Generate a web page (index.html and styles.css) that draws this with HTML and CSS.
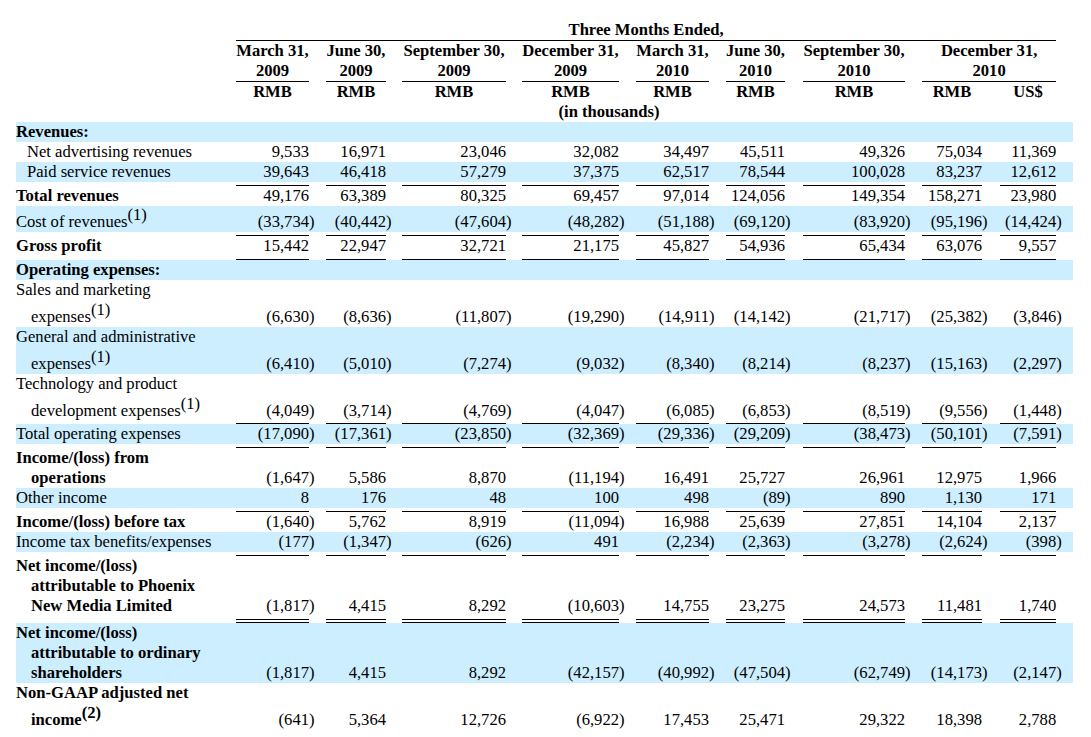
FILE: index.html
```html
<!DOCTYPE html>
<html>
<head>
<meta charset="utf-8">
<title>Three Months Ended</title>
<link rel="stylesheet" href="styles.css">
</head>
<body>
<table class="fin">
<colgroup>
<col class="c-lb">
<col class="w73"><col class="w17">
<col class="w60"><col class="w16">
<col class="w104"><col class="w16">
<col class="w97"><col class="w17">
<col class="w73"><col class="w17">
<col class="w59"><col class="w18">
<col class="w102"><col class="w17">
<col class="w60"><col class="w18">
<col class="w56"><col class="w17">
</colgroup>
<tbody>
<tr class="hd"><td></td><td colspan="17" class="tl">Three Months Ended,</td><td></td></tr>
<tr class="hd"><td></td><td class="tl">March 31,<br>2009</td><td></td><td class="tl">June 30,<br>2009</td><td></td><td class="tl">September 30,<br>2009</td><td></td><td class="tl">December 31,<br>2009</td><td></td><td class="tl">March 31,<br>2010</td><td></td><td class="tl">June 30,<br>2010</td><td></td><td class="tl">September 30,<br>2010</td><td></td><td colspan="3" class="tl">December 31,<br>2010</td><td></td></tr>
<tr class="hd"><td></td><td>RMB</td><td></td><td>RMB</td><td></td><td>RMB</td><td></td><td>RMB</td><td></td><td>RMB</td><td></td><td>RMB</td><td></td><td>RMB</td><td></td><td>RMB</td><td></td><td>US$</td><td></td></tr>
<tr class="hd"><td></td><td colspan="15">(in thousands)</td><td></td><td></td><td></td></tr>

<tr class="band"><td><div class="b">Revenues:</div></td><td></td><td></td><td></td><td></td><td></td><td></td><td></td><td></td><td></td><td></td><td></td><td></td><td></td><td></td><td></td><td></td><td></td><td></td></tr>
<tr><td><div class="in1">Net advertising revenues</div></td><td class="n">9,533</td><td class="p"></td><td class="n">16,971</td><td class="p"></td><td class="n">23,046</td><td class="p"></td><td class="n">32,082</td><td class="p"></td><td class="n">34,497</td><td class="p"></td><td class="n">45,511</td><td class="p"></td><td class="n">49,326</td><td class="p"></td><td class="n">75,034</td><td class="p"></td><td class="n">11,369</td><td class="p"></td></tr>
<tr class="band"><td><div class="in1">Paid service revenues</div></td><td class="n">39,643</td><td class="p"></td><td class="n">46,418</td><td class="p"></td><td class="n">57,279</td><td class="p"></td><td class="n">37,375</td><td class="p"></td><td class="n">62,517</td><td class="p"></td><td class="n">78,544</td><td class="p"></td><td class="n">100,028</td><td class="p"></td><td class="n">83,237</td><td class="p"></td><td class="n">12,612</td><td class="p"></td></tr>
<tr class="rule"><td></td><td><div class="u"></div></td><td></td><td><div class="u"></div></td><td></td><td><div class="u"></div></td><td></td><td><div class="u"></div></td><td></td><td><div class="u"></div></td><td></td><td><div class="u"></div></td><td></td><td><div class="u"></div></td><td></td><td><div class="u"></div></td><td></td><td><div class="u"></div></td><td></td></tr>
<tr><td><div class="b">Total revenues</div></td><td class="n">49,176</td><td class="p"></td><td class="n">63,389</td><td class="p"></td><td class="n">80,325</td><td class="p"></td><td class="n">69,457</td><td class="p"></td><td class="n">97,014</td><td class="p"></td><td class="n">124,056</td><td class="p"></td><td class="n">149,354</td><td class="p"></td><td class="n">158,271</td><td class="p"></td><td class="n">23,980</td><td class="p"></td></tr>
<tr class="band"><td><div class="sl1">Cost of revenues<sup>(1)</sup></div></td><td class="n">(33,734</td><td class="p">)</td><td class="n">(40,442</td><td class="p">)</td><td class="n">(47,604</td><td class="p">)</td><td class="n">(48,282</td><td class="p">)</td><td class="n">(51,188</td><td class="p">)</td><td class="n">(69,120</td><td class="p">)</td><td class="n">(83,920</td><td class="p">)</td><td class="n">(95,196</td><td class="p">)</td><td class="n">(14,424</td><td class="p">)</td></tr>
<tr class="rule"><td></td><td><div class="u"></div></td><td></td><td><div class="u"></div></td><td></td><td><div class="u"></div></td><td></td><td><div class="u"></div></td><td></td><td><div class="u"></div></td><td></td><td><div class="u"></div></td><td></td><td><div class="u"></div></td><td></td><td><div class="u"></div></td><td></td><td><div class="u"></div></td><td></td></tr>
<tr><td><div class="b">Gross profit</div></td><td class="n">15,442</td><td class="p"></td><td class="n">22,947</td><td class="p"></td><td class="n">32,721</td><td class="p"></td><td class="n">21,175</td><td class="p"></td><td class="n">45,827</td><td class="p"></td><td class="n">54,936</td><td class="p"></td><td class="n">65,434</td><td class="p"></td><td class="n">63,076</td><td class="p"></td><td class="n">9,557</td><td class="p"></td></tr>
<tr class="rule"><td></td><td><div class="u"></div></td><td></td><td><div class="u"></div></td><td></td><td><div class="u"></div></td><td></td><td><div class="u"></div></td><td></td><td><div class="u"></div></td><td></td><td><div class="u"></div></td><td></td><td><div class="u"></div></td><td></td><td><div class="u"></div></td><td></td><td><div class="u"></div></td><td></td></tr>
<tr class="band"><td><div class="b">Operating expenses:</div></td><td></td><td></td><td></td><td></td><td></td><td></td><td></td><td></td><td></td><td></td><td></td><td></td><td></td><td></td><td></td><td></td><td></td><td></td></tr>
<tr><td><div>Sales and marketing</div><div class="in2 sl">expenses<sup>(1)</sup></div></td><td class="n">(6,630</td><td class="p">)</td><td class="n">(8,636</td><td class="p">)</td><td class="n">(11,807</td><td class="p">)</td><td class="n">(19,290</td><td class="p">)</td><td class="n">(14,911</td><td class="p">)</td><td class="n">(14,142</td><td class="p">)</td><td class="n">(21,717</td><td class="p">)</td><td class="n">(25,382</td><td class="p">)</td><td class="n">(3,846</td><td class="p">)</td></tr>
<tr class="band"><td><div>General and administrative</div><div class="in2 sl">expenses<sup>(1)</sup></div></td><td class="n">(6,410</td><td class="p">)</td><td class="n">(5,010</td><td class="p">)</td><td class="n">(7,274</td><td class="p">)</td><td class="n">(9,032</td><td class="p">)</td><td class="n">(8,340</td><td class="p">)</td><td class="n">(8,214</td><td class="p">)</td><td class="n">(8,237</td><td class="p">)</td><td class="n">(15,163</td><td class="p">)</td><td class="n">(2,297</td><td class="p">)</td></tr>
<tr><td><div>Technology and product</div><div class="in2 sl">development expenses<sup>(1)</sup></div></td><td class="n">(4,049</td><td class="p">)</td><td class="n">(3,714</td><td class="p">)</td><td class="n">(4,769</td><td class="p">)</td><td class="n">(4,047</td><td class="p">)</td><td class="n">(6,085</td><td class="p">)</td><td class="n">(6,853</td><td class="p">)</td><td class="n">(8,519</td><td class="p">)</td><td class="n">(9,556</td><td class="p">)</td><td class="n">(1,448</td><td class="p">)</td></tr>
<tr class="rule"><td></td><td><div class="u3"></div></td><td></td><td><div class="u3"></div></td><td></td><td><div class="u3"></div></td><td></td><td><div class="u3"></div></td><td></td><td><div class="u3"></div></td><td></td><td><div class="u3"></div></td><td></td><td><div class="u3"></div></td><td></td><td><div class="u3"></div></td><td></td><td><div class="u3"></div></td><td></td></tr>
<tr class="band"><td><div>Total operating expenses</div></td><td class="n">(17,090</td><td class="p">)</td><td class="n">(17,361</td><td class="p">)</td><td class="n">(23,850</td><td class="p">)</td><td class="n">(32,369</td><td class="p">)</td><td class="n">(29,336</td><td class="p">)</td><td class="n">(29,209</td><td class="p">)</td><td class="n">(38,473</td><td class="p">)</td><td class="n">(50,101</td><td class="p">)</td><td class="n">(7,591</td><td class="p">)</td></tr>
<tr class="rule"><td></td><td><div class="u"></div></td><td></td><td><div class="u"></div></td><td></td><td><div class="u"></div></td><td></td><td><div class="u"></div></td><td></td><td><div class="u"></div></td><td></td><td><div class="u"></div></td><td></td><td><div class="u"></div></td><td></td><td><div class="u"></div></td><td></td><td><div class="u"></div></td><td></td></tr>
<tr><td><div class="b">Income/(loss) from</div><div class="b in2">operations</div></td><td class="n">(1,647</td><td class="p">)</td><td class="n">5,586</td><td class="p"></td><td class="n">8,870</td><td class="p"></td><td class="n">(11,194</td><td class="p">)</td><td class="n">16,491</td><td class="p"></td><td class="n">25,727</td><td class="p"></td><td class="n">26,961</td><td class="p"></td><td class="n">12,975</td><td class="p"></td><td class="n">1,966</td><td class="p"></td></tr>
<tr class="band"><td><div>Other income</div></td><td class="n">8</td><td class="p"></td><td class="n">176</td><td class="p"></td><td class="n">48</td><td class="p"></td><td class="n">100</td><td class="p"></td><td class="n">498</td><td class="p"></td><td class="n">(89</td><td class="p">)</td><td class="n">890</td><td class="p"></td><td class="n">1,130</td><td class="p"></td><td class="n">171</td><td class="p"></td></tr>
<tr class="rule"><td></td><td><div class="u"></div></td><td></td><td><div class="u"></div></td><td></td><td><div class="u"></div></td><td></td><td><div class="u"></div></td><td></td><td><div class="u"></div></td><td></td><td><div class="u"></div></td><td></td><td><div class="u"></div></td><td></td><td><div class="u"></div></td><td></td><td><div class="u"></div></td><td></td></tr>
<tr><td><div class="b">Income/(loss) before tax</div></td><td class="n">(1,640</td><td class="p">)</td><td class="n">5,762</td><td class="p"></td><td class="n">8,919</td><td class="p"></td><td class="n">(11,094</td><td class="p">)</td><td class="n">16,988</td><td class="p"></td><td class="n">25,639</td><td class="p"></td><td class="n">27,851</td><td class="p"></td><td class="n">14,104</td><td class="p"></td><td class="n">2,137</td><td class="p"></td></tr>
<tr class="band"><td><div>Income tax benefits/expenses</div></td><td class="n">(177</td><td class="p">)</td><td class="n">(1,347</td><td class="p">)</td><td class="n">(626</td><td class="p">)</td><td class="n">491</td><td class="p"></td><td class="n">(2,234</td><td class="p">)</td><td class="n">(2,363</td><td class="p">)</td><td class="n">(3,278</td><td class="p">)</td><td class="n">(2,624</td><td class="p">)</td><td class="n">(398</td><td class="p">)</td></tr>
<tr class="rule"><td></td><td><div class="u"></div></td><td></td><td><div class="u"></div></td><td></td><td><div class="u"></div></td><td></td><td><div class="u"></div></td><td></td><td><div class="u"></div></td><td></td><td><div class="u"></div></td><td></td><td><div class="u"></div></td><td></td><td><div class="u"></div></td><td></td><td><div class="u"></div></td><td></td></tr>
<tr><td><div class="b">Net income/(loss)</div><div class="b in2">attributable to Phoenix</div><div class="b in2">New Media Limited</div></td><td class="n">(1,817</td><td class="p">)</td><td class="n">4,415</td><td class="p"></td><td class="n">8,292</td><td class="p"></td><td class="n">(10,603</td><td class="p">)</td><td class="n">14,755</td><td class="p"></td><td class="n">23,275</td><td class="p"></td><td class="n">24,573</td><td class="p"></td><td class="n">11,481</td><td class="p"></td><td class="n">1,740</td><td class="p"></td></tr>
<tr class="rule"><td></td><td><div class="uu"></div></td><td></td><td><div class="uu"></div></td><td></td><td><div class="uu"></div></td><td></td><td><div class="uu"></div></td><td></td><td><div class="uu"></div></td><td></td><td><div class="uu"></div></td><td></td><td><div class="uu"></div></td><td></td><td><div class="uu"></div></td><td></td><td><div class="uu"></div></td><td></td></tr>
<tr class="band"><td><div class="b">Net income/(loss)</div><div class="b in2">attributable to ordinary</div><div class="b in2">shareholders</div></td><td class="n">(1,817</td><td class="p">)</td><td class="n">4,415</td><td class="p"></td><td class="n">8,292</td><td class="p"></td><td class="n">(42,157</td><td class="p">)</td><td class="n">(40,992</td><td class="p">)</td><td class="n">(47,504</td><td class="p">)</td><td class="n">(62,749</td><td class="p">)</td><td class="n">(14,173</td><td class="p">)</td><td class="n">(2,147</td><td class="p">)</td></tr>
<tr><td><div class="b">Non-GAAP adjusted net</div><div class="b in2 sl">income<sup>(2)</sup></div></td><td class="n">(641</td><td class="p">)</td><td class="n">5,364</td><td class="p"></td><td class="n">12,726</td><td class="p"></td><td class="n">(6,922</td><td class="p">)</td><td class="n">17,453</td><td class="p"></td><td class="n">25,471</td><td class="p"></td><td class="n">29,322</td><td class="p"></td><td class="n">18,398</td><td class="p"></td><td class="n">2,788</td><td class="p"></td></tr>
</tbody>
</table>
</body>
</html>
```

FILE: styles.css
```css
body {
  margin: 0;
  background: #ffffff;
  color: #000000;
  font-family: "Liberation Serif", "Times New Roman", serif;
  font-size: 16.6px;
}

.fin {
  margin: 20px 0 0 16px;
  width: 1057px;
  table-layout: fixed;
  border-collapse: separate;
  border-spacing: 0;
}

.c-lb { width: 220px; }
.w16 { width: 16px; }
.w17 { width: 17px; }
.w18 { width: 18px; }
.w56 { width: 56px; }
.w59 { width: 59px; }
.w60 { width: 60px; }
.w73 { width: 73px; }
.w97 { width: 97px; }
.w102 { width: 102px; }
.w104 { width: 104px; }

.fin td {
  padding: 0;
  vertical-align: bottom;
  line-height: 20px;
  white-space: nowrap;
}

.fin td.n { text-align: right; }
.fin td.p { text-align: left; }

.band td { background: #cceeff; }

.hd td {
  font-weight: bold;
  text-align: center;
  overflow: visible;
}

.fin td.tl { border-bottom: 1px solid #000000; }

.b { font-weight: bold; }
.in1 { padding-left: 11px; }
.in2 { padding-left: 15px; }
.sl { padding-top: 7px; }
.sl1 { padding-top: 6px; }

sup {
  font-size: 100%;
  line-height: 0;
  vertical-align: 7px;
}

.u {
  height: 3px;
  border-bottom: 1px solid #000000;
}

.u3 {
  height: 2px;
  border-bottom: 1px solid #000000;
}

.uu {
  height: 3px;
  border-bottom: 4px double #000000;
}
```
